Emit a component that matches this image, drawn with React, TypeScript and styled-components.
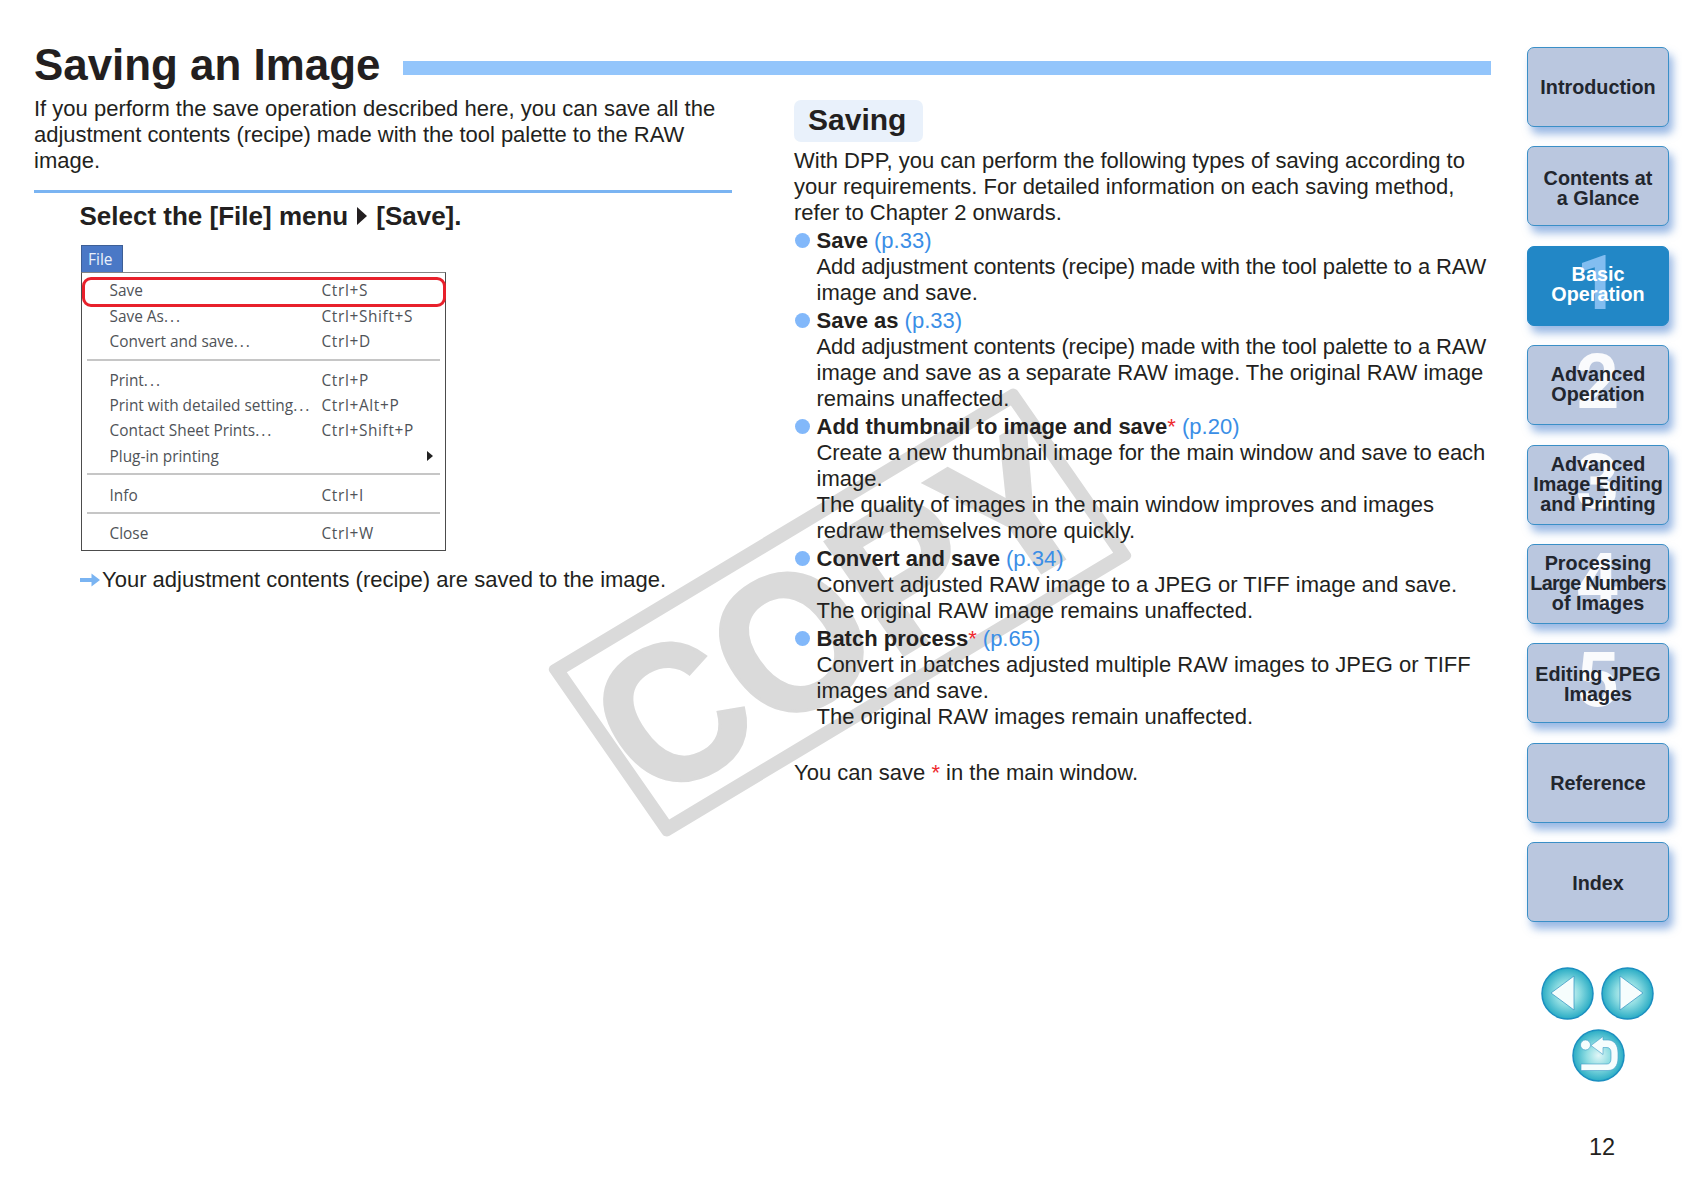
import React from "react";
import styled, { createGlobalStyle } from "styled-components";

const Global = createGlobalStyle`
  html, body { margin: 0; padding: 0; background: #fff; }
  body { font-family: "Liberation Sans", Arial, sans-serif; color: #231f20; }
`;

const Page = styled.div`
  position: relative;
  width: 1682px;
  height: 1190px;
  overflow: hidden;
  display: flex;
  background: #fff;
`;

const Main = styled.main`
  position: relative;
  width: 1491px;
  padding: 39px 0 0 34px;
  box-sizing: border-box;
`;

const Header = styled.header`
  display: flex;
  align-items: flex-start;
  height: 57px;
`;

const Title = styled.h1`
  margin: 0;
  font-size: 43.9px;
  line-height: 52px;
  font-weight: 700;
  white-space: nowrap;
`;

const TitleBar = styled.div`
  flex: 1;
  height: 14px;
  margin: 22px 0 0 23px;
  background: #93c5fb;
`;

const Columns = styled.div`
  position: relative;
  display: grid;
  grid-template-columns: 698px 697px;
  column-gap: 62px;
`;

const Column = styled.section`
  position: relative;
  min-width: 0;
`;

const Body = styled.p`
  margin: 0;
  font-size: 22px;
  line-height: 26.1px;
  white-space: nowrap;
`;

const Tracked = styled.span<{ $ls: number }>`
  letter-spacing: ${(p) => p.$ls}px;
`;

const Rule = styled.hr`
  margin: 16px 0 0;
  border: 0;
  height: 3px;
  background: #7ab4f2;
`;

const Step = styled.h2`
  display: flex;
  align-items: center;
  margin: 7px 0 0 45.5px;
  font-size: 26px;
  line-height: 32px;
  font-weight: 700;
  white-space: nowrap;
`;

const StepArrow = styled.span`
  width: 0;
  height: 0;
  margin: 0 9px;
  border-style: solid;
  border-width: 9px 0 9px 10px;
  border-color: transparent transparent transparent #231f20;
`;

const Shot = styled.div`
  position: relative;
  width: 365px;
  margin: 13px 0 0 47px;
  font-family: "Open Sans", "DejaVu Sans", sans-serif;
  color: #4f5358;
`;

const FileTab = styled.div`
  width: 42px;
  height: 27px;
  box-sizing: border-box;
  padding: 3px 0 0 6px;
  background: #4a78c6;
  border: 1px solid #3d5f96;
  border-bottom: 0;
  color: #eaf1fb;
  font-size: 15.5px;
  line-height: 20px;
`;

const Menu = styled.div`
  box-sizing: border-box;
  height: 279px;
  padding: 5px 5px 0;
  border: 1.5px solid #4c4c4c;
  border-top-color: #858585;
  background: #fff;
`;

const MenuRow = styled.div`
  display: grid;
  grid-template-columns: 212px 1fr 12px;
  align-items: center;
  height: 25.3px;
  padding-left: 22.5px;
  font-size: 15.4px;
  white-space: nowrap;
`;

const Dots = styled.span`
  letter-spacing: 2px;
`;

const Shortcut = styled.span`
  letter-spacing: 0.65px;
`;

const Sep = styled.div`
  height: 2px;
  margin: 4.5px 0 7px;
  background: #c6c6c6;
`;

const SubArrow = styled.span`
  width: 0;
  height: 0;
  margin-left: -1px;
  border-style: solid;
  border-width: 5.5px 0 5.5px 6px;
  border-color: transparent transparent transparent #222;
`;

const Highlight = styled.div`
  position: absolute;
  left: 1px;
  top: 32px;
  width: 364px;
  height: 29.5px;
  box-sizing: border-box;
  border: 3.5px solid #e8202b;
  border-radius: 9px;
`;

const Result = styled.p`
  display: flex;
  align-items: center;
  margin: 16px 0 0 46px;
  font-size: 22px;
  line-height: 26.1px;
  white-space: nowrap;
`;

const ResultArrow = styled.svg`
  width: 20px;
  height: 16px;
  margin-right: 2px;
`;

const Pill = styled.h2`
  display: block;
  width: fit-content;
  margin: 0;
  padding: 0 17px 0 14px;
  height: 42px;
  line-height: 40px;
  border-radius: 7px;
  background: #e9f1fb;
  font-size: 30px;
  font-weight: 700;
`;

const RightCol = styled(Column)`
  margin-top: 4px;
`;

const Para = styled(Body)`
  margin-top: 6px;
`;

const Item = styled.div`
  position: relative;
  margin-top: 1.6px;
  padding-left: 22.5px;
`;

const Bullet = styled.span`
  position: absolute;
  left: 1px;
  top: 5.5px;
  width: 15px;
  height: 15px;
  border-radius: 50%;
  background: #82b8fa;
`;

const ItemHead = styled.div`
  font-size: 22px;
  line-height: 26.1px;
  white-space: nowrap;
`;

const Strong = styled.strong`
  font-weight: 700;
`;

const Link = styled.span`
  color: #3a8ee6;
`;

const Star = styled.span`
  color: #ee2a2e;
`;

const Note = styled(Body)`
  margin-top: 29.5px;
`;

const Watermark = styled.div`
  position: absolute;
  left: 567px;
  top: 509px;
  width: 546px;
  height: 207px;
  box-sizing: border-box;
  display: flex;
  align-items: center;
  justify-content: center;
  border: 14px solid #dadada;
  border-radius: 5px;
  transform: rotate(-31deg) skewX(3.8deg);
  color: #dadada;
  font-size: 200px;
  font-weight: 700;
  white-space: nowrap;
  -webkit-text-stroke: 3px #dadada;
`;

const WatermarkText = styled.span`
  display: inline-block;
  transform: scaleX(0.93);
`;

const Foreground = styled.div`
  position: relative;
`;

const Sidebar = styled.nav`
  width: 191px;
  padding: 47px 0 0 36px;
  box-sizing: border-box;
  display: flex;
  flex-direction: column;
`;

const SideButton = styled.div<{ $active?: boolean; $top?: number; $bottom?: number }>`
  position: relative;
  flex: none;
  width: 142px;
  height: 80px;
  margin-bottom: 19.4px;
  padding: ${(p) => p.$top || 0}px 0 ${(p) => p.$bottom || 0}px;
  box-sizing: border-box;
  display: flex;
  align-items: center;
  justify-content: center;
  text-align: center;
  border-radius: 7px;
  border: 1.5px solid ${(p) => (p.$active ? "#2287c6" : "#3a8fc7")};
  background: ${(p) => (p.$active ? "#2287c6" : "#bac7df")};
  color: ${(p) => (p.$active ? "#fff" : "#22262e")};
  box-shadow: 4px 7px 9px rgba(70, 125, 205, 0.55);
  font-size: 19.8px;
  line-height: 20px;
  font-weight: 700;
`;

const Digit = styled.span<{ $active?: boolean }>`
  position: absolute;
  left: 0;
  right: 1px;
  top: -4px;
  font-family: Roboto, "Liberation Sans", sans-serif;
  font-size: 76px;
  line-height: 80px;
  font-weight: 700;
  color: ${(p) => (p.$active ? "#82bdf0" : "rgba(255,255,255,0.92)")};
`;

const ButtonLabel = styled.span`
  position: relative;
  white-space: nowrap;
`;

const LabelLine = styled.span<{ $tight?: boolean }>`
  display: block;
  letter-spacing: ${(p) => (p.$tight ? "-0.75px" : "0")};
`;

const RoundRow = styled.div`
  display: flex;
  gap: 7px;
  margin: 25px 0 0 14px;
`;

const RoundSvg = styled.svg`
  display: block;
  width: 53px;
  height: 53px;
`;

const BackWrap = styled.div`
  margin: 9px 0 0 45px;
`;

const PageNo = styled.div`
  margin: 51px 0 0 62px;
  font-size: 23.5px;
  line-height: 28px;
`;

const Grad = () => (
  <defs>
    <radialGradient id="teal" cx="50%" cy="50%" r="52%">
      <stop offset="0%" stopColor="#e2f6f7" />
      <stop offset="45%" stopColor="#8fdde2" />
      <stop offset="100%" stopColor="#21a8c2" />
    </radialGradient>
  </defs>
);

type MenuItem = { label: string; dots?: boolean; keys?: string; sub?: boolean } | null;

const menu: MenuItem[] = [
  { label: "Save", keys: "Ctrl+S" },
  { label: "Save As", dots: true, keys: "Ctrl+Shift+S" },
  { label: "Convert and save", dots: true, keys: "Ctrl+D" },
  null,
  { label: "Print", dots: true, keys: "Ctrl+P" },
  { label: "Print with detailed setting", dots: true, keys: "Ctrl+Alt+P" },
  { label: "Contact Sheet Prints", dots: true, keys: "Ctrl+Shift+P" },
  { label: "Plug-in printing", sub: true },
  null,
  { label: "Info", keys: "Ctrl+I" },
  null,
  { label: "Close", keys: "Ctrl+W" },
];

const sidebar: {
  lines: string[];
  digit?: string;
  active?: boolean;
  top?: number;
  bottom?: number;
  tight?: number;
}[] = [
  { lines: ["Introduction"] },
  { lines: ["Contents at", "a Glance"], top: 4 },
  { lines: ["Basic", "Operation"], digit: "1", active: true, bottom: 4 },
  { lines: ["Advanced", "Operation"], digit: "2", bottom: 2 },
  { lines: ["Advanced", "Image Editing", "and Printing"], digit: "3", bottom: 2 },
  { lines: ["Processing", "Large Numbers", "of Images"], digit: "4", bottom: 2, tight: 1 },
  { lines: ["Editing JPEG", "Images"], digit: "5", top: 2 },
  { lines: ["Reference"] },
  { lines: ["Index"], top: 2 },
];

export default function App() {
  return (
    <Page>
      <Global />
      <Main>
        <Watermark aria-hidden>
          <WatermarkText>COPY</WatermarkText>
        </Watermark>
        <Foreground>
          <Header>
            <Title>Saving an Image</Title>
            <TitleBar />
          </Header>
          <Columns>
            <Column>
              <Body>
                If you perform the save operation described here, you can save all the
                <br />
                <Tracked $ls={-0.03}>adjustment contents (recipe) made with the tool palette to the RAW</Tracked>
                <br />
                image.
              </Body>
              <Rule />
              <Step>
                Select the [File] menu
                <StepArrow />
                [Save].
              </Step>
              <Shot>
                <FileTab>File</FileTab>
                <Menu>
                  {menu.map((m, i) =>
                    m ? (
                      <MenuRow key={i}>
                        <span>
                          {m.label}
                          {m.dots && <Dots>...</Dots>}
                        </span>
                        <Shortcut>{m.keys}</Shortcut>
                        {m.sub ? <SubArrow /> : <span />}
                      </MenuRow>
                    ) : (
                      <Sep key={i} />
                    )
                  )}
                </Menu>
                <Highlight />
              </Shot>
              <Result>
                <ResultArrow viewBox="0 0 20 16">
                  <path d="M0 6h11.5V1.5L20 8l-8.5 6.5V10H0z" fill="#7ab4f2" />
                </ResultArrow>
                Your adjustment contents (recipe) are saved to the image.
              </Result>
            </Column>
            <RightCol>
              <Pill>Saving</Pill>
              <Para>
                With DPP, you can perform the following types of saving according to
                <br />
                your requirements. For detailed information on each saving method,
                <br />
                refer to Chapter 2 onwards.
              </Para>
              <Item>
                <Bullet />
                <ItemHead>
                  <Strong>Save</Strong> <Link>(p.33)</Link>
                </ItemHead>
                <Body>
                  <Tracked $ls={-0.14}>Add adjustment contents (recipe) made with the tool palette to a RAW</Tracked>
                  <br />
                  image and save.
                </Body>
              </Item>
              <Item>
                <Bullet />
                <ItemHead>
                  <Strong>Save as</Strong> <Link>(p.33)</Link>
                </ItemHead>
                <Body>
                  <Tracked $ls={-0.14}>Add adjustment contents (recipe) made with the tool palette to a RAW</Tracked>
                  <br />
                  image and save as a separate RAW image. The original RAW image
                  <br />
                  remains unaffected.
                </Body>
              </Item>
              <Item>
                <Bullet />
                <ItemHead>
                  <Strong>Add thumbnail to image and save</Strong>
                  <Star>*</Star> <Link>(p.20)</Link>
                </ItemHead>
                <Body>
                  <Tracked $ls={-0.08}>Create a new thumbnail image for the main window and save to each</Tracked>
                  <br />
                  image.
                  <br />
                  The quality of images in the main window improves and images
                  <br />
                  redraw themselves more quickly.
                </Body>
              </Item>
              <Item>
                <Bullet />
                <ItemHead>
                  <Strong>Convert and save</Strong> <Link>(p.34)</Link>
                </ItemHead>
                <Body>
                  Convert adjusted RAW image to a JPEG or TIFF image and save.
                  <br />
                  The original RAW image remains unaffected.
                </Body>
              </Item>
              <Item>
                <Bullet />
                <ItemHead>
                  <Strong>Batch process</Strong>
                  <Star>*</Star> <Link>(p.65)</Link>
                </ItemHead>
                <Body>
                  Convert in batches adjusted multiple RAW images to JPEG or TIFF
                  <br />
                  images and save.
                  <br />
                  The original RAW images remain unaffected.
                </Body>
              </Item>
              <Note>
                You can save <Star>*</Star> in the main window.
              </Note>
            </RightCol>
          </Columns>
        </Foreground>
      </Main>
      <Sidebar>
        {sidebar.map((b) => (
          <SideButton
            key={b.lines.join(" ")}
            $active={b.active}
            $top={b.top}
            $bottom={b.bottom}
          >
            {b.digit && <Digit $active={b.active}>{b.digit}</Digit>}
            <ButtonLabel>
              {b.lines.map((l, i) => (
                <LabelLine key={l} $tight={b.tight === i}>
                  {l}
                </LabelLine>
              ))}
            </ButtonLabel>
          </SideButton>
        ))}
        <RoundRow>
          <RoundSvg viewBox="0 0 53 53">
            <Grad />
            <circle cx="26.5" cy="26.5" r="25.5" fill="url(#teal)" stroke="#1b8fc0" strokeWidth="1.5" />
            <path d="M10 26 33 9v34z" fill="#f6fdfd" stroke="#3f9cc7" strokeWidth="0.8" />
          </RoundSvg>
          <RoundSvg viewBox="0 0 53 53">
            <circle cx="26.5" cy="26.5" r="25.5" fill="url(#teal)" stroke="#1b8fc0" strokeWidth="1.5" />
            <path d="M42 26 19 9v34z" fill="#f6fdfd" stroke="#3f9cc7" strokeWidth="0.8" />
          </RoundSvg>
        </RoundRow>
        <BackWrap>
          <RoundSvg viewBox="0 0 53 53">
            <circle cx="26.5" cy="26.5" r="25.5" fill="url(#teal)" stroke="#1b8fc0" strokeWidth="1.5" />
            <path
              d="M19 16.5 31 7.5v3.5h5c6 0 10 5 10 13v5c0 8-4 12.5-10 12.5H9v-6.5h26c2.5 0 4-1.8 4-5.5v-6c0-3-1.5-5-4-5h-4v7z"
              fill="#f6fdfd"
              stroke="#3f9cc7"
              strokeWidth="0.6"
            />
            <circle cx="13.5" cy="16" r="5" fill="#f6fdfd" stroke="#3f9cc7" strokeWidth="0.6" />
          </RoundSvg>
        </BackWrap>
        <PageNo>12</PageNo>
      </Sidebar>
    </Page>
  );
}
